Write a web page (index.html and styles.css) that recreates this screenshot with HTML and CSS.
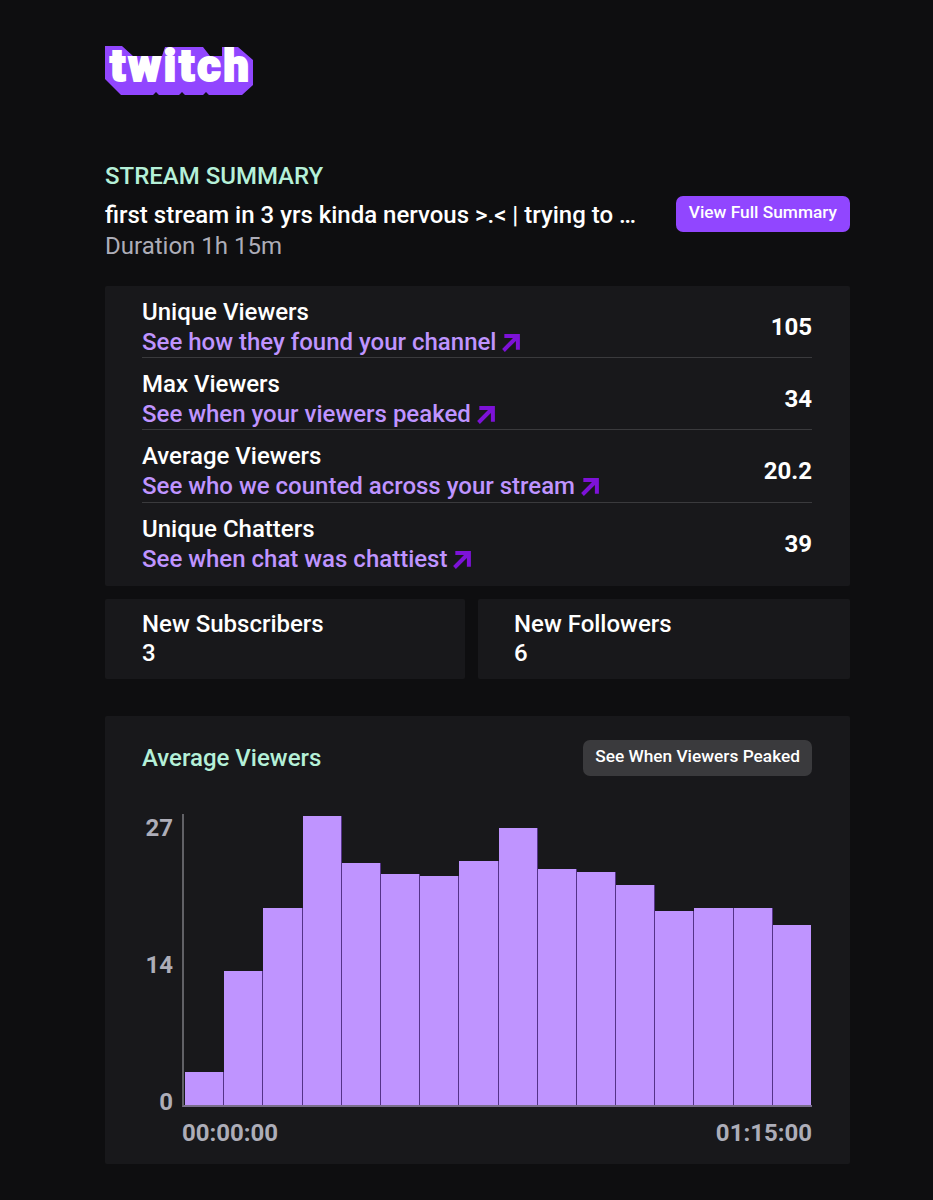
FILE: index.html
```html
<!DOCTYPE html>
<html lang="en">

<head>
    <meta charset="UTF-8">
    <title>Stream Summary</title>
    <link rel="stylesheet" href="styles.css">
</head>

<body>
    <div class="page">
        <div class="logo">
            <svg class="logo-back" viewBox="0 0 149 50"><polygon points="0,0 17,0 28,10 57,10 60,1 98,1 105,10 117,10 117,1 133,1 148,14 148,39 137,49 104,49 101,46 98,49 80,49 77,46 74,49 54,49 51,46 48,49 16,49 0,33"/></svg>
            <span class="logo-text">twitch</span>
        </div>

        <div class="summary-head">
            <div class="summary-text">
                <div class="eyebrow">STREAM SUMMARY</div>
                <div class="stream-title">first stream in 3 yrs kinda nervous &gt;.&lt; | trying to …</div>
                <div class="duration">Duration 1h 15m</div>
            </div>
            <a href="#" class="btn-primary">View Full Summary</a>
        </div>

        <div class="panel stats">
            <div class="stat-row">
                <div>
                    <div class="stat-name">Unique Viewers</div>
                    <a href="#" class="stat-link">See how they found your channel
                        <svg class="arrow" viewBox="0 0 18 18"><path d="M3 1h14v14h-3.6V7.2L3.5 17 1 14.4l9.8-9.8H3z"/></svg></a>
                </div>
                <div class="stat-value">105</div>
            </div>
            <div class="stat-row">
                <div>
                    <div class="stat-name">Max Viewers</div>
                    <a href="#" class="stat-link">See when your viewers peaked
                        <svg class="arrow" viewBox="0 0 18 18"><path d="M3 1h14v14h-3.6V7.2L3.5 17 1 14.4l9.8-9.8H3z"/></svg></a>
                </div>
                <div class="stat-value">34</div>
            </div>
            <div class="stat-row">
                <div>
                    <div class="stat-name">Average Viewers</div>
                    <a href="#" class="stat-link">See who we counted across your stream
                        <svg class="arrow" viewBox="0 0 18 18"><path d="M3 1h14v14h-3.6V7.2L3.5 17 1 14.4l9.8-9.8H3z"/></svg></a>
                </div>
                <div class="stat-value">20.2</div>
            </div>
            <div class="stat-row">
                <div>
                    <div class="stat-name">Unique Chatters</div>
                    <a href="#" class="stat-link">See when chat was chattiest
                        <svg class="arrow" viewBox="0 0 18 18"><path d="M3 1h14v14h-3.6V7.2L3.5 17 1 14.4l9.8-9.8H3z"/></svg></a>
                </div>
                <div class="stat-value">39</div>
            </div>
        </div>

        <div class="cards">
            <div class="panel card card-left">
                <div class="stat-name">New Subscribers</div>
                <div class="stat-name">3</div>
            </div>
            <div class="panel card card-right">
                <div class="stat-name">New Followers</div>
                <div class="stat-name">6</div>
            </div>
        </div>

        <div class="panel chart-panel">
            <div class="chart-head">
                <div class="chart-title">Average Viewers</div>
                <a href="#" class="btn-grey">See When Viewers Peaked</a>
            </div>
            <div class="chart">
                <div class="y-labels">
                    <span>27</span>
                    <span>14</span>
                    <span>0</span>
                </div>
                <div class="plot">
                    <div class="bar" style="height:33px"></div>
                    <div class="bar" style="height:134px"></div>
                    <div class="bar" style="height:197px"></div>
                    <div class="bar" style="height:289px"></div>
                    <div class="bar" style="height:242px"></div>
                    <div class="bar" style="height:231px"></div>
                    <div class="bar" style="height:229px"></div>
                    <div class="bar" style="height:244px"></div>
                    <div class="bar" style="height:277px"></div>
                    <div class="bar" style="height:236px"></div>
                    <div class="bar" style="height:233px"></div>
                    <div class="bar" style="height:220px"></div>
                    <div class="bar" style="height:194px"></div>
                    <div class="bar" style="height:197px"></div>
                    <div class="bar" style="height:197px"></div>
                    <div class="bar" style="height:180px"></div>
                </div>
            </div>
            <div class="x-labels">
                <span>00:00:00</span>
                <span>01:15:00</span>
            </div>
        </div>
    </div>
</body>

</html>
```

FILE: styles.css
```css
* {
    box-sizing: border-box;
}

html,
body {
    margin: 0;
    padding: 0;
}

body {
    background-color: #0e0e10;
    color: #fff;
    font-family: Roboto, "Liberation Sans", sans-serif;
}

a {
    text-decoration: none;
}

.page {
    width: 745px;
    height: 1200px;
    margin-left: 105px;
    padding-top: 46px;
}

/* logo */
.logo {
    display: grid;
    width: 149px;
    height: 50px;
    margin-bottom: 66px;
}

.logo-back,
.logo-text {
    grid-area: 1 / 1;
}

.logo-back {
    width: 149px;
    height: 50px;
    fill: #9146ff;
}

.logo-text {
    padding: 0 0 0 5px;
    font-size: 45px;
    font-weight: 900;
    line-height: 40px;
    letter-spacing: 2.8px;
    color: #fff;
    -webkit-text-stroke: 2px #fff;
    white-space: nowrap;
}

/* heading */
.summary-head {
    display: flex;
    justify-content: space-between;
    align-items: center;
    height: 100px;
    margin-bottom: 24px;
}

.eyebrow {
    font-size: 24px;
    font-weight: 500;
    line-height: 28px;
    color: #b5f0d8;
    margin-top: -1px;
    margin-bottom: 10px;
}

.stream-title {
    font-size: 24px;
    font-weight: 500;
    line-height: 30px;
}

.duration {
    font-size: 24px;
    line-height: 30px;
    color: #adadb8;
    margin-top: 1px;
}

.btn-primary {
    display: block;
    margin-top: 4px;
    padding: 0 13px;
    height: 36px;
    line-height: 33px;
    font-size: 17.3px;
    font-weight: 500;
    color: #fff;
    background-color: #9146ff;
    border-radius: 7px;
}

/* panels */
.panel {
    background-color: #18181b;
    border-radius: 2px;
}

.stats {
    height: 300px;
    padding: 0 38px 0 37px;
}

.stat-row {
    display: flex;
    justify-content: space-between;
    align-items: center;
    height: 72.2px;
    padding-top: 11px;
    border-bottom: 1px solid #3a3a3d;
}

.stat-row:last-child {
    padding-top: 10px;
    border-bottom: 0;
}

.stat-name {
    font-size: 24px;
    font-weight: 500;
    line-height: 30px;
}

.stat-link {
    display: block;
    font-size: 24px;
    font-weight: 500;
    line-height: 30px;
    color: #bf94ff;
}

.arrow {
    width: 20px;
    height: 20px;
    margin-left: -1px;
    vertical-align: -3px;
    fill: #7d12d8;
}

.stat-value {
    font-size: 24px;
    font-weight: 700;
}

.cards {
    display: flex;
    gap: 13px;
    margin-top: 13px;
}

.card {
    height: 80px;
    padding: 10px 36px 0 37px;
}

.card-left {
    width: 360px;
}

.card-right {
    flex: 1;
    padding-left: 36px;
}

.stat-name + .stat-name {
    line-height: 28px;
}

/* chart */
.chart-panel {
    height: 448px;
    margin-top: 37px;
    padding: 24px 38px 0 37px;
}

.chart-head {
    display: flex;
    justify-content: space-between;
    align-items: center;
    height: 36px;
    margin-bottom: 38px;
}

.chart-title {
    font-size: 24px;
    font-weight: 500;
    color: #b5f0d8;
}

.btn-grey {
    display: block;
    height: 36px;
    padding: 0 12px;
    line-height: 33px;
    font-size: 17.3px;
    font-weight: 500;
    color: #fff;
    background-color: #3a3a3d;
    border-radius: 7px;
}

.chart {
    display: flex;
    height: 293px;
}

.y-labels {
    width: 40px;
    display: flex;
    flex-direction: column;
    justify-content: space-between;
    margin: 0 0 -9px;
    padding-right: 9px;
    text-align: right;
    font-size: 24px;
    font-weight: 700;
    line-height: 28px;
    color: #adadb8;
}

.plot {
    flex: 1;
    display: flex;
    align-items: flex-end;
    padding-left: 1px;
    padding-right: 1px;
    border-left: 2px solid #616166;
    border-bottom: 2px solid #7a6f8c;
}

.bar {
    flex: 1;
    background-color: #bf94ff;
    border-right: 1px solid #553388;
}

.bar:last-child {
    border-right: 0;
}

.x-labels {
    display: flex;
    justify-content: space-between;
    margin-top: 12px;
    padding-left: 40px;
    font-size: 24px;
    font-weight: 700;
    line-height: 28px;
    color: #adadb8;
}
```
